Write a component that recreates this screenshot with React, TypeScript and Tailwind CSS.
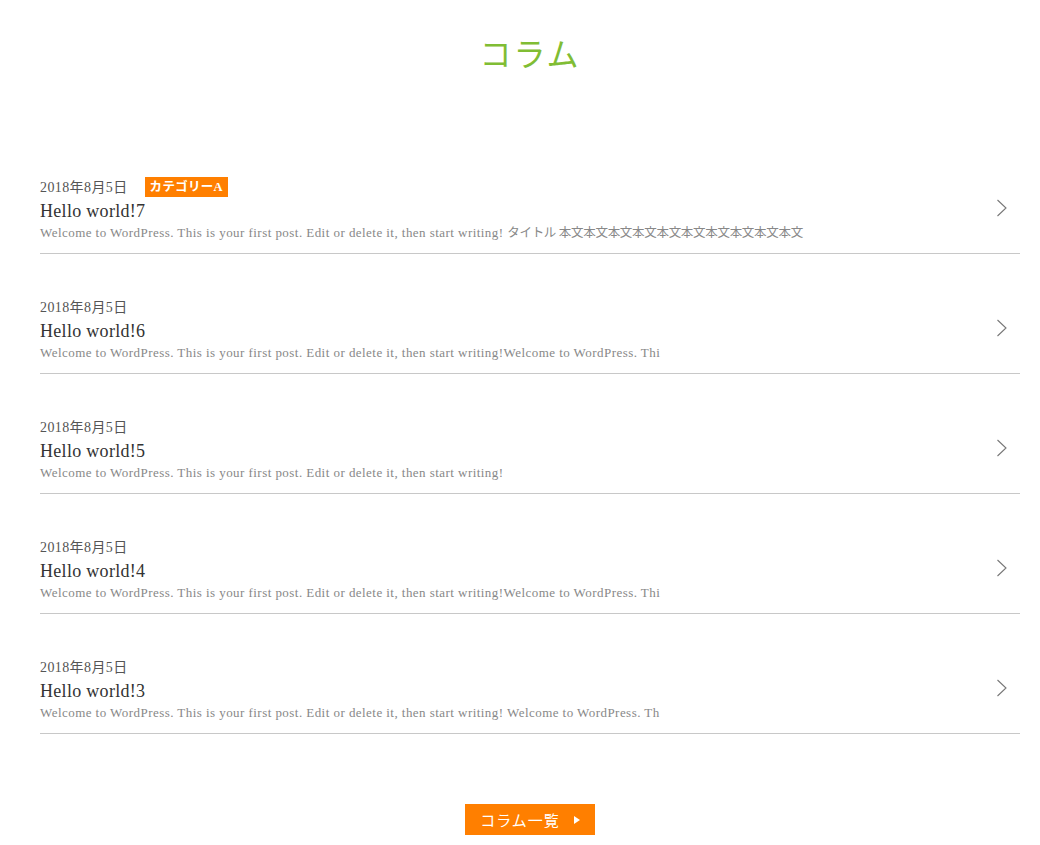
import React from "react";

const posts: { title: string; cat?: string; excerpt: string; jp?: string }[] = [
  {
    title: "Hello world!7",
    cat: "カテゴリーA",
    excerpt: "Welcome to WordPress. This is your first post. Edit or delete it, then start writing! ",
    jp: "タイトル 本文本文本文本文本文本文本文本文本文本文",
  },
  {
    title: "Hello world!6",
    excerpt:
      "Welcome to WordPress. This is your first post. Edit or delete it, then start writing!Welcome to WordPress. Thi",
  },
  {
    title: "Hello world!5",
    excerpt: "Welcome to WordPress. This is your first post. Edit or delete it, then start writing!",
  },
  {
    title: "Hello world!4",
    excerpt:
      "Welcome to WordPress. This is your first post. Edit or delete it, then start writing!Welcome to WordPress. Thi",
  },
  {
    title: "Hello world!3",
    excerpt:
      "Welcome to WordPress. This is your first post. Edit or delete it, then start writing! Welcome to WordPress. Th",
  },
];

export default function App() {
  return (
    <div
      className="w-[1040px] min-h-[845px] bg-white pl-[40px] pr-[20px]"
      style={{ fontFamily: '"Liberation Serif", "Noto Sans CJK JP", serif' }}
    >
      <h2 className="pt-[31px] text-center text-[32px] leading-[48px] tracking-[2px] text-[#80bd34] font-normal">
        コラム
      </h2>
      <ul className="mt-[55px]">
        {posts.map((p, i) => (
          <li key={i} className="flex items-center border-b border-[#c8c8c8] pt-[43px] pb-[10px]">
            <div className="flex-1">
              <div className="flex h-[20px] items-center text-[14px] tracking-[0.4px] text-[#555]">
                <span>2018年8月5日</span>
                {p.cat && (
                  <span className="ml-[17px] flex h-[20px] items-center bg-[#ff7f00] px-[5px] text-[12.5px] font-bold tracking-[0.3px] text-white">
                    {p.cat}
                  </span>
                )}
              </div>
              <div className="mt-[2px] text-[18px] leading-[24px] tracking-[0.3px] text-[#333]">{p.title}</div>
              <div className="text-[13px] leading-[20px] tracking-[0.45px] text-[#888]">
                {p.excerpt}
                {p.jp && <span className="text-[12.5px] tracking-[-0.3px]">{p.jp}</span>}
              </div>
            </div>
            <svg width="12" height="18" viewBox="0 0 12 18" className="mr-[12px] mb-[4px]">
              <path d="M1.5 1 L10 9 L1.5 17" fill="none" stroke="#777" strokeWidth="1.1" />
            </svg>
          </li>
        ))}
      </ul>
      <div className="mt-[70px] flex justify-center">
        <a className="flex h-[31px] w-[130px] items-center justify-center gap-[14px] bg-[#ff7f00] pt-[3px] text-[15px] text-white tracking-[1px]">
          <span>コラム一覧</span>
          <svg width="6" height="8" viewBox="0 0 6 8" className="mb-[2px]">
            <path d="M0 0 L6 4 L0 8 Z" fill="#fff" />
          </svg>
        </a>
      </div>
    </div>
  );
}
